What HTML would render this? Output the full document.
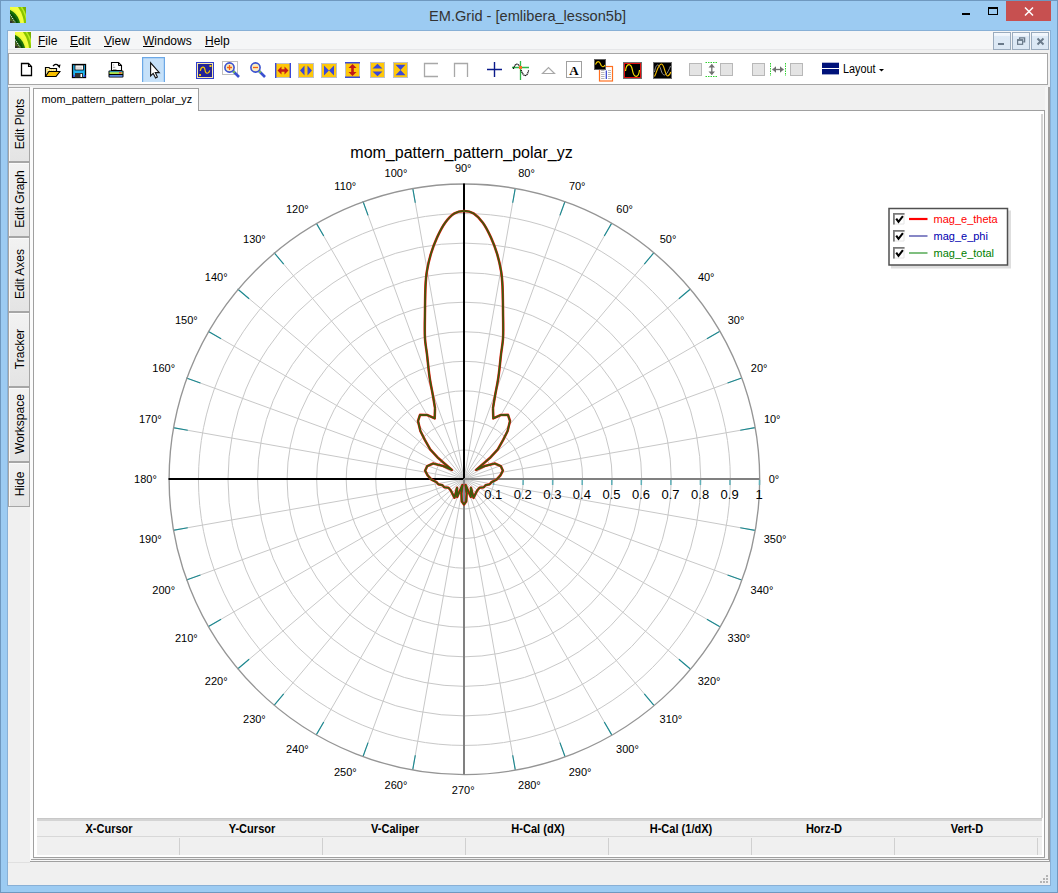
<!DOCTYPE html>
<html><head><meta charset="utf-8">
<style>
*{box-sizing:border-box}
html,body{margin:0;padding:0}
body{width:1058px;height:893px;position:relative;overflow:hidden;background:#9ccbf2;font-family:"Liberation Sans", sans-serif;}
.a{position:absolute}
</style></head><body>
<div class="a" style="left:0px;top:0px;width:1058px;height:893px;background:#9ccbf2;border:1px solid #6f98bf;box-sizing:border-box"></div>
<div class="a" style="left:429px;top:6.5px;font-size:14.6px;color:#333;white-space:nowrap;line-height:18px">EM.Grid - [emlibera_lesson5b]</div>
<div class="a" style="left:1006px;top:1px;width:45px;height:20px;background:#c75050;"></div>
<div class="a" style="left:7px;top:30px;width:1044px;height:856px;background:#f0f0f0;border:1px solid #88b0d6"></div>
<div class="a" style="left:8px;top:31px;width:1042px;height:18px;background:#f5f6f7;"></div>
<div class="a" style="left:8px;top:49px;width:1042px;height:1px;background:#e6e7e9;"></div>
<div class="a" style="left:38px;top:33px;font-size:12px;line-height:16px;white-space:nowrap;color:#000">
<span style="position:absolute;left:0"><u>F</u>ile</span>
<span style="position:absolute;left:32px"><u>E</u>dit</span>
<span style="position:absolute;left:66px"><u>V</u>iew</span>
<span style="position:absolute;left:105px"><u>W</u>indows</span>
<span style="position:absolute;left:167px"><u>H</u>elp</span>
</div>
<div class="a" style="left:993px;top:32px;width:18px;height:18px;background:linear-gradient(#f4f8fd 0%,#eef4fb 20%,#dde9f5 22%,#dce8f4 100%);border:1px solid #9aabbd"></div>
<div class="a" style="left:1012px;top:32px;width:18px;height:18px;background:linear-gradient(#f4f8fd 0%,#eef4fb 20%,#dde9f5 22%,#dce8f4 100%);border:1px solid #9aabbd"></div>
<div class="a" style="left:1031px;top:32px;width:18px;height:18px;background:linear-gradient(#f4f8fd 0%,#eef4fb 20%,#dde9f5 22%,#dce8f4 100%);border:1px solid #9aabbd"></div>
<div class="a" style="left:8px;top:53px;width:1040px;height:32px;background:#fff;border:1px solid #a6a6a6"></div>
<div class="a" style="left:30px;top:87px;width:20px;height:775px;background:#f0f0f0;"></div>
<div class="a" style="left:30px;top:87px;width:3px;height:773px;background:#fbfbfb;"></div>
<div class="a" style="left:1045px;top:87px;width:3px;height:773px;background:#f6f6f6;"></div>
<div class="a" style="left:1048px;top:87px;width:2px;height:775px;background:#a0a0a0;"></div>
<div class="a" style="left:31px;top:859px;width:1018px;height:1px;background:#a0a0a0;"></div>
<div class="a" style="left:30px;top:860px;width:1019px;height:1px;background:#f8f8f8;"></div>
<div class="a" style="left:30px;top:861px;width:1020px;height:1px;background:#a0a0a0;"></div>
<div class="a" style="left:33px;top:87px;width:1012px;height:23px;background:#f0f0f0;"></div>
<div class="a" style="left:8px;top:87px;width:22px;height:75px;border:1px solid #a6a6a6;background:linear-gradient(#f2f2f2,#e4e4e4);box-shadow:inset 1px 1px 0 #fafafa"></div>
<div class="a" style="left:-20.5px;top:116.5px;width:80px;height:14px;line-height:14px;text-align:center;font-size:12px;color:#000;transform:rotate(-90deg);white-space:nowrap">Edit Plots</div>
<div class="a" style="left:8px;top:162px;width:22px;height:75px;border:1px solid #a6a6a6;background:linear-gradient(#f2f2f2,#e4e4e4);box-shadow:inset 1px 1px 0 #fafafa"></div>
<div class="a" style="left:-20.5px;top:191.5px;width:80px;height:14px;line-height:14px;text-align:center;font-size:12px;color:#000;transform:rotate(-90deg);white-space:nowrap">Edit Graph</div>
<div class="a" style="left:8px;top:237px;width:22px;height:75px;border:1px solid #a6a6a6;background:linear-gradient(#f2f2f2,#e4e4e4);box-shadow:inset 1px 1px 0 #fafafa"></div>
<div class="a" style="left:-20.5px;top:266.5px;width:80px;height:14px;line-height:14px;text-align:center;font-size:12px;color:#000;transform:rotate(-90deg);white-space:nowrap">Edit Axes</div>
<div class="a" style="left:8px;top:312px;width:22px;height:75px;border:1px solid #a6a6a6;background:linear-gradient(#f2f2f2,#e4e4e4);box-shadow:inset 1px 1px 0 #fafafa"></div>
<div class="a" style="left:-20.5px;top:341.5px;width:80px;height:14px;line-height:14px;text-align:center;font-size:12px;color:#000;transform:rotate(-90deg);white-space:nowrap">Tracker</div>
<div class="a" style="left:8px;top:387px;width:22px;height:75px;border:1px solid #a6a6a6;background:linear-gradient(#f2f2f2,#e4e4e4);box-shadow:inset 1px 1px 0 #fafafa"></div>
<div class="a" style="left:-20.5px;top:416.5px;width:80px;height:14px;line-height:14px;text-align:center;font-size:12px;color:#000;transform:rotate(-90deg);white-space:nowrap">Workspace</div>
<div class="a" style="left:8px;top:462px;width:22px;height:45px;border:1px solid #a6a6a6;background:linear-gradient(#f2f2f2,#e4e4e4);box-shadow:inset 1px 1px 0 #fafafa"></div>
<div class="a" style="left:-20.5px;top:476.5px;width:80px;height:14px;line-height:14px;text-align:center;font-size:12px;color:#000;transform:rotate(-90deg);white-space:nowrap">Hide</div>
<div class="a" style="left:33px;top:110px;width:1012px;height:748px;background:#fff;border:1px solid #a0a0a0"></div>
<div class="a" style="left:33px;top:88px;width:166px;height:23px;background:#fff;border:1px solid #a0a0a0;border-bottom:none"></div>
<div class="a" style="left:41.5px;top:93px;font-size:10.85px;line-height:13px;white-space:nowrap">mom_pattern_pattern_polar_yz</div>
<div class="a" style="left:1041px;top:114px;width:2px;height:704px;background:#d4d4d4;"></div>
<div class="a" style="left:37px;top:818px;width:1005px;height:37px;background:#f0f0f0;"></div>
<div class="a" style="left:37px;top:818px;width:1005px;height:1px;background:#c8c8c8;"></div>
<div class="a" style="left:37px;top:819px;width:1005px;height:2px;background:#d4d4d4;"></div>
<div class="a" style="left:37px;top:836px;width:1005px;height:1px;background:#d8d8d8;"></div>
<div class="a" style="left:38.5px;top:821.5px;width:140px;height:15px;line-height:15px;text-align:center;font-size:12px;font-weight:bold;transform:scaleX(0.92);color:#000;white-space:nowrap">X-Cursor</div>
<div class="a" style="left:181.5px;top:821.5px;width:140px;height:15px;line-height:15px;text-align:center;font-size:12px;font-weight:bold;transform:scaleX(0.92);color:#000;white-space:nowrap">Y-Cursor</div>
<div class="a" style="left:324.5px;top:821.5px;width:140px;height:15px;line-height:15px;text-align:center;font-size:12px;font-weight:bold;transform:scaleX(0.92);color:#000;white-space:nowrap">V-Caliper</div>
<div class="a" style="left:467.5px;top:821.5px;width:140px;height:15px;line-height:15px;text-align:center;font-size:12px;font-weight:bold;transform:scaleX(0.92);color:#000;white-space:nowrap">H-Cal (dX)</div>
<div class="a" style="left:610.5px;top:821.5px;width:140px;height:15px;line-height:15px;text-align:center;font-size:12px;font-weight:bold;transform:scaleX(0.92);color:#000;white-space:nowrap">H-Cal (1/dX)</div>
<div class="a" style="left:753.5px;top:821.5px;width:140px;height:15px;line-height:15px;text-align:center;font-size:12px;font-weight:bold;transform:scaleX(0.92);color:#000;white-space:nowrap">Horz-D</div>
<div class="a" style="left:896.5px;top:821.5px;width:140px;height:15px;line-height:15px;text-align:center;font-size:12px;font-weight:bold;transform:scaleX(0.92);color:#000;white-space:nowrap">Vert-D</div>
<div class="a" style="left:179px;top:838px;width:1px;height:17px;background:#d0d0d0;"></div>
<div class="a" style="left:322px;top:838px;width:1px;height:17px;background:#d0d0d0;"></div>
<div class="a" style="left:465px;top:838px;width:1px;height:17px;background:#d0d0d0;"></div>
<div class="a" style="left:608px;top:838px;width:1px;height:17px;background:#d0d0d0;"></div>
<div class="a" style="left:751px;top:838px;width:1px;height:17px;background:#d0d0d0;"></div>
<div class="a" style="left:894px;top:838px;width:1px;height:17px;background:#d0d0d0;"></div>
<div class="a" style="left:1037px;top:838px;width:1px;height:17px;background:#d0d0d0;"></div>
<div class="a" style="left:8px;top:862px;width:1042px;height:23px;background:#f0f0f0;"></div>
<div class="a" style="left:8px;top:862px;width:22px;height:1px;background:#e0e0e0;"></div>
<svg class="a" style="left:0;top:0" width="1058" height="893" font-family='"Liberation Sans", sans-serif'>
<g transform="translate(10,7)">
<clipPath id="ic10"><rect x="0" y="0" width="16" height="16"/></clipPath>
<g clip-path="url(#ic10)">
<rect x="0" y="0" width="16" height="16" fill="#78b000"/>
<ellipse cx="-6" cy="20" rx="24" ry="31" fill="#b8ec20"/>
<ellipse cx="-6" cy="20" rx="22.5" ry="29.5" fill="#88c400"/>
<ellipse cx="-6" cy="20" rx="20.2" ry="27.7" fill="#f4ff40"/>
<ellipse cx="-6" cy="20" rx="17.5" ry="20" fill="#e8f838"/>
<ellipse cx="-6" cy="20" rx="16.4" ry="18.3" fill="#1a7008"/>
<ellipse cx="-6" cy="20" rx="14.5" ry="16" fill="#084e06"/>
<path d="M0,7.5 L5.5,16" stroke="#e8e8e0" stroke-width="1.1" stroke-dasharray="1.2,0.9"/>
<path d="M0,9 V16 H5 Z" fill="#4a6020"/>
<rect x="0" y="14" width="2.5" height="2" fill="#303030"/>
</g></g>
<g transform="translate(15,32)">
<clipPath id="ic15"><rect x="0" y="0" width="16" height="16"/></clipPath>
<g clip-path="url(#ic15)">
<rect x="0" y="0" width="16" height="16" fill="#78b000"/>
<ellipse cx="-6" cy="20" rx="24" ry="31" fill="#b8ec20"/>
<ellipse cx="-6" cy="20" rx="22.5" ry="29.5" fill="#88c400"/>
<ellipse cx="-6" cy="20" rx="20.2" ry="27.7" fill="#f4ff40"/>
<ellipse cx="-6" cy="20" rx="17.5" ry="20" fill="#e8f838"/>
<ellipse cx="-6" cy="20" rx="16.4" ry="18.3" fill="#1a7008"/>
<ellipse cx="-6" cy="20" rx="14.5" ry="16" fill="#084e06"/>
<path d="M0,7.5 L5.5,16" stroke="#e8e8e0" stroke-width="1.1" stroke-dasharray="1.2,0.9"/>
<path d="M0,9 V16 H5 Z" fill="#4a6020"/>
<rect x="0" y="14" width="2.5" height="2" fill="#303030"/>
</g></g>
<path d="M962,14 H970" stroke="#000" stroke-width="2"/>
<rect x="988.5" y="7.5" width="9" height="7" fill="none" stroke="#000" stroke-width="1"/>
<path d="M988,8 H998" stroke="#000" stroke-width="2"/>
<path d="M1025,7.5 L1033,15.5 M1033,7.5 L1025,15.5" stroke="#fff" stroke-width="1.5"/>
<path d="M998,44 H1004" stroke="#6a7a8a" stroke-width="2"/>
<rect x="1017.6" y="40" width="5" height="4.3" fill="none" stroke="#6a7a8a" stroke-width="1.2"/>
<path d="M1017,40 H1023.2" stroke="#6a7a8a" stroke-width="1.6"/>
<path d="M1019.6,39 V37.8 H1024.6 V41.8 H1023.2" fill="none" stroke="#6a7a8a" stroke-width="1.3"/>
<path d="M1037.5,38.5 L1043.5,44.5 M1043.5,38.5 L1037.5,44.5" stroke="#6a7a8a" stroke-width="1.9"/>
<path d="M21.5,63.5 H28.5 L31.5,66.5 V75.5 H21.5 Z" fill="#fff" stroke="#000" stroke-width="1.3"/>
<path d="M28.5,63.5 V66.5 H31.5" fill="none" stroke="#000" stroke-width="1.1"/>
<path d="M45.5,76.5 V67.5 H49 L50,68.5 H56.5 V71.5 H59.5 L55.5,76.5 Z" fill="#fbf0b0" stroke="#000" stroke-width="1.2"/>
<path d="M47,69 h1 v1 h-1z M49,70 h1 v1 h-1z M51,69.5 h1 v1 h-1z M53,69.5 h1 v1 h-1z M47,71 h1 v1 h-1z" fill="#f0d040"/>
<path d="M45.5,76.5 L48.8,71.5 H60 L56,76.5 Z" fill="#f8c000" stroke="#000" stroke-width="1.2" stroke-linejoin="round"/>
<path d="M53,66.2 Q55.5,62.8 58.6,65.6" fill="none" stroke="#000" stroke-width="1.2"/>
<path d="M57,65.3 L60.6,64.6 L59.6,68.2 Z" fill="#000"/>
<rect x="72.5" y="64.5" width="13" height="13" fill="#20b4f0" stroke="#000" stroke-width="1.3"/>
<rect x="75" y="65" width="8.5" height="5" fill="#fff" stroke="#000" stroke-width="0.8"/>
<rect x="76" y="66.5" width="6" height="2.5" fill="#ddd"/>
<rect x="75" y="73" width="8" height="4.5" fill="#333"/>
<rect x="80.5" y="74" width="1.5" height="3" fill="#fff"/>
<rect x="73" y="75" width="1.5" height="2" fill="#4040e0"/><rect x="84" y="75" width="1.5" height="2" fill="#4040e0"/>
<path d="M111.5,62.5 H118.5 L121.5,65.5 V70.5 H111.5 Z" fill="#fff" stroke="#000" stroke-width="1.1"/>
<path d="M118.5,62.5 V65.5 H121.5" fill="none" stroke="#000" stroke-width="1"/>
<rect x="113" y="64.5" width="1.2" height="0.9" fill="#999"/><rect x="113" y="66.8" width="2.2" height="0.9" fill="#999"/><rect x="113" y="69" width="3.5" height="0.9" fill="#999"/>
<rect x="108.5" y="70.5" width="15" height="7" rx="1" fill="#000"/>
<rect x="109.5" y="72" width="13" height="2" fill="#b0e040"/>
<rect x="109.5" y="71.3" width="13" height="0.9" fill="#40c8f0"/>
<rect x="119" y="72" width="2.5" height="1.5" fill="#f04040"/>
<rect x="109.5" y="75" width="13" height="1.8" fill="#5888e0"/>
<rect x="142" y="57" width="23" height="25" fill="#c6e1f9"/>
<path d="M142.6,82 V57.6 H164.4 V82" fill="none" stroke="#6ca8e6" stroke-width="1.2"/>
<path d="M150.6,62.8 V76 L153.2,73.4 L155.6,78 L157.4,77.1 L155.3,72.6 H159.3 Z" fill="#fff" stroke="#111" stroke-width="1.1" stroke-linejoin="miter"/>
<rect x="196" y="62" width="18" height="17" fill="#3040d0"/>
<rect x="197" y="63" width="16" height="15" fill="#f8e8a8"/>
<rect x="198" y="64" width="14" height="13" fill="#22249a"/>
<path d="M200.3,71 C201,66 204.5,66 205,70 C205.5,74 208.5,74.5 209.8,70.5" fill="none" stroke="#f8c800" stroke-width="1.2"/>
<rect x="209.5" y="65" width="2" height="2" fill="#f8c800"/><rect x="199" y="74" width="2" height="2" fill="#f8c800"/>
<rect x="222.5" y="61.5" width="15" height="13" fill="#fff" stroke="#c0c0c0" stroke-width="1"/>
<path d="M233,71 L239,77" stroke="#3a50d0" stroke-width="2.6"/>
<path d="M233.3,71.3 L234.6,72.6" stroke="#80d040" stroke-width="2"/>
<circle cx="229.5" cy="67.5" r="4.6" fill="#f8ecc0" stroke="#3a50d0" stroke-width="1.6"/>
<path d="M227,67.5 H232 M229.5,65 V70" stroke="#f86010" stroke-width="1.3"/>
<path d="M259,71 L265,77" stroke="#3a50d0" stroke-width="2.6"/>
<path d="M259.3,71.3 L260.6,72.6" stroke="#80d040" stroke-width="2"/>
<circle cx="255.5" cy="67.5" r="4.6" fill="#f8ecc0" stroke="#3a50d0" stroke-width="1.6"/>
<path d="M253,67.5 H258" stroke="#f86010" stroke-width="1.3"/>
<rect x="275" y="63" width="16" height="15" fill="#ffc808"/>
<path d="M275,63.5 H291 M275,77.5 H291" stroke="#c0c0c8" stroke-width="1"/>
<path d="M275.7,63 V78 M290.3,63 V78" stroke="#3a48d8" stroke-width="1.4"/>
<path d="M277.5,70.5 L281.5,66.5 V69.2 H284.5 V66.5 L288.5,70.5 L284.5,74.5 V71.8 H281.5 V74.5 Z" fill="#c01818"/>
<rect x="298.5" y="63.5" width="15" height="14" fill="#ffc808" stroke="#c0c0c8" stroke-width="1"/>
<path d="M300,70.5 L304.5,65.5 V75.5 Z M307.5,65.5 L312,70.5 L307.5,75.5 Z" fill="#3a48d8"/>
<rect x="321.5" y="63.5" width="15" height="14" fill="#ffc808" stroke="#c0c0c8" stroke-width="1"/>
<path d="M324,65.5 L329,70.5 L324,75.5 Z M334,65.5 L329,70.5 L334,75.5 Z" fill="#3a48d8"/>
<rect x="345" y="62" width="15" height="16" fill="#ffc808"/>
<path d="M345.5,62 V78 M359.5,62 V78" stroke="#c0c0c8" stroke-width="1"/>
<path d="M345,62.7 H360 M345,77.3 H360" stroke="#3a48d8" stroke-width="1.4"/>
<path d="M352.5,64 L356.5,68 H353.8 V72 H356.5 L352.5,76 L348.5,72 H351.2 V68 H348.5 Z" fill="#c01818"/>
<rect x="370.5" y="62.5" width="14" height="15" fill="#ffc808" stroke="#c0c0c8" stroke-width="1"/>
<path d="M372.5,68.5 L377.5,63.8 L382.5,68.5 Z M372.5,71.5 H382.5 L377.5,76.2 Z" fill="#3a48d8"/>
<rect x="393.5" y="62.5" width="14" height="15" fill="#ffc808" stroke="#c0c0c8" stroke-width="1"/>
<path d="M395.5,64.8 H405.5 L400.5,70 L405.5,75.2 H395.5 L400.5,70 Z" fill="#3a48d8"/>
<path d="M438,63.5 H424.5 V76.5 H438" fill="none" stroke="#a8a8a8" stroke-width="1.3"/>
<path d="M454.5,77 V63.5 H467.5 V77" fill="none" stroke="#a8a8a8" stroke-width="1.3"/>
<path d="M487,69.5 H502 M494.5,62 V77" stroke="#0a1a8a" stroke-width="1.4"/>
<path d="M512,67.5 H529 M520.5,61 V80" stroke="#30b848" stroke-width="1.3"/>
<path d="M513.4,68.8 C514.3,65.5 516,63.8 517.5,64.3 C518.5,64.6 519,65.5 520,67 M521,70 C522,72.5 523.5,75.6 525,75.6 C526.8,75.6 528,73.2 528.6,70.2" fill="none" stroke="#000" stroke-width="1.2" stroke-dasharray="1.3,0.5"/>
<rect x="519" y="66" width="3" height="3" fill="#f87020"/>
<path d="M542.5,73.5 L548.5,67.5 L554.5,73.5 Z" fill="none" stroke="#a8a8a8" stroke-width="1.2"/>
<rect x="566.5" y="61.5" width="15" height="16" fill="#fff" stroke="#a0a0a0" stroke-width="1"/>
<text x="574" y="75" font-family="Liberation Serif" font-weight="bold" font-size="13" text-anchor="middle" fill="#000">A</text>
<rect x="599.5" y="66.5" width="13" height="14.5" fill="#fff" stroke="#ff7020" stroke-width="1.2"/>
<path d="M601,70.5 H604.5 M601,72.5 H604.5 M601,74.5 H604.5 M601,76.5 H604.5 M601,78.5 H604.5 M608,70.5 H611 M608,72.5 H611 M608,74.5 H611 M608,76.5 H611 M608,78.5 H611" stroke="#b0b0b0" stroke-width="0.9"/>
<path d="M606.3,70.5 V79" stroke="#3040d0" stroke-width="1.2"/>
<rect x="594.5" y="59.5" width="11" height="10" fill="#000" stroke="#606060" stroke-width="1"/>
<path d="M595.5,64.5 C597,60.5 599.5,61 600.5,64 C601.5,67.5 604,67.5 605,65" fill="none" stroke="#f8d000" stroke-width="1.1"/>
<rect x="623.5" y="62.5" width="18" height="16" fill="#000" stroke="#707070" stroke-width="1"/>
<rect x="624.5" y="63.5" width="16" height="14" fill="none" stroke="#e01010" stroke-width="1"/>
<path d="M625.5,71 C626.5,62.5 631,62.5 632.5,70.5 C634,78.5 638.5,78.5 639.5,70" fill="none" stroke="#f8e000" stroke-width="1.2"/>
<rect x="653.5" y="62.5" width="18" height="16" fill="#000" stroke="#707070" stroke-width="1"/>
<path d="M654.5,72 C656,63 659,63 661,70 C663,77 666,77.5 670.5,66" fill="none" stroke="#909090" stroke-width="1"/>
<path d="M654.5,76.5 C657,72 658,64 661.5,64 C664.5,64 665,76 667.5,76 C669,76 670,74 670.8,72" fill="none" stroke="#f8c000" stroke-width="1.1"/>
<rect x="689.5" y="63.5" width="12" height="12" fill="#e4e4e4" stroke="#b8b8b8" stroke-width="1"/>
<rect x="720.5" y="63.5" width="12" height="12" fill="#e4e4e4" stroke="#b8b8b8" stroke-width="1"/>
<rect x="752.5" y="63.5" width="12" height="12" fill="#e4e4e4" stroke="#b8b8b8" stroke-width="1"/>
<rect x="790.5" y="63.5" width="12" height="12" fill="#e4e4e4" stroke="#b8b8b8" stroke-width="1"/>
<path d="M705.5,62.5 H718 M705.5,76.5 H718" stroke="#30d030" stroke-width="1" stroke-dasharray="1.5,1"/>
<path d="M711.8,64.5 V74.5" stroke="#707070" stroke-width="1.3"/>
<path d="M708.5,67.5 L711.8,64 L715,67.5 Z M708.5,71.5 L711.8,75 L715,71.5 Z" fill="#707070"/>
<path d="M770.5,63 V76 M785.5,63 V76" stroke="#30d030" stroke-width="1" stroke-dasharray="1.5,1"/>
<path d="M772.5,69.5 H783.5" stroke="#707070" stroke-width="1.3"/>
<path d="M776,66.3 L772.3,69.5 L776,72.7 Z M780,66.3 L783.7,69.5 L780,72.7 Z" fill="#707070"/>
<rect x="822" y="62.7" width="17" height="5.3" fill="#00127a"/><rect x="822" y="69" width="17" height="5.4" fill="#00127a"/>
<text x="843" y="72.7" font-size="12" fill="#000" textLength="32.5" lengthAdjust="spacingAndGlyphs">Layout</text>
<path d="M879,69 H884 L881.5,71.5 Z" fill="#000"/>
<circle cx="464.4" cy="479.5" r="29.55" fill="none" stroke="#c8c8c8" stroke-width="1"/>
<circle cx="464.4" cy="479.5" r="59.10" fill="none" stroke="#c8c8c8" stroke-width="1"/>
<circle cx="464.4" cy="479.5" r="88.65" fill="none" stroke="#c8c8c8" stroke-width="1"/>
<circle cx="464.4" cy="479.5" r="118.20" fill="none" stroke="#c8c8c8" stroke-width="1"/>
<circle cx="464.4" cy="479.5" r="147.75" fill="none" stroke="#c8c8c8" stroke-width="1"/>
<circle cx="464.4" cy="479.5" r="177.30" fill="none" stroke="#c8c8c8" stroke-width="1"/>
<circle cx="464.4" cy="479.5" r="206.85" fill="none" stroke="#c8c8c8" stroke-width="1"/>
<circle cx="464.4" cy="479.5" r="236.40" fill="none" stroke="#c8c8c8" stroke-width="1"/>
<circle cx="464.4" cy="479.5" r="265.95" fill="none" stroke="#c8c8c8" stroke-width="1"/>
<line x1="464.0" y1="479.0" x2="755.01" y2="427.69" stroke="#c8c8c8" stroke-width="1"/>
<line x1="464.0" y1="479.0" x2="741.68" y2="377.93" stroke="#c8c8c8" stroke-width="1"/>
<line x1="464.0" y1="479.0" x2="719.91" y2="331.25" stroke="#c8c8c8" stroke-width="1"/>
<line x1="464.0" y1="479.0" x2="690.37" y2="289.06" stroke="#c8c8c8" stroke-width="1"/>
<line x1="464.0" y1="479.0" x2="653.94" y2="252.63" stroke="#c8c8c8" stroke-width="1"/>
<line x1="464.0" y1="479.0" x2="611.75" y2="223.09" stroke="#c8c8c8" stroke-width="1"/>
<line x1="464.0" y1="479.0" x2="565.07" y2="201.32" stroke="#c8c8c8" stroke-width="1"/>
<line x1="464.0" y1="479.0" x2="515.31" y2="187.99" stroke="#c8c8c8" stroke-width="1"/>
<line x1="464.0" y1="479.0" x2="412.69" y2="187.99" stroke="#c8c8c8" stroke-width="1"/>
<line x1="464.0" y1="479.0" x2="362.93" y2="201.32" stroke="#c8c8c8" stroke-width="1"/>
<line x1="464.0" y1="479.0" x2="316.25" y2="223.09" stroke="#c8c8c8" stroke-width="1"/>
<line x1="464.0" y1="479.0" x2="274.06" y2="252.63" stroke="#c8c8c8" stroke-width="1"/>
<line x1="464.0" y1="479.0" x2="237.63" y2="289.06" stroke="#c8c8c8" stroke-width="1"/>
<line x1="464.0" y1="479.0" x2="208.09" y2="331.25" stroke="#c8c8c8" stroke-width="1"/>
<line x1="464.0" y1="479.0" x2="186.32" y2="377.93" stroke="#c8c8c8" stroke-width="1"/>
<line x1="464.0" y1="479.0" x2="172.99" y2="427.69" stroke="#c8c8c8" stroke-width="1"/>
<line x1="464.0" y1="479.0" x2="172.99" y2="530.31" stroke="#c8c8c8" stroke-width="1"/>
<line x1="464.0" y1="479.0" x2="186.32" y2="580.07" stroke="#c8c8c8" stroke-width="1"/>
<line x1="464.0" y1="479.0" x2="208.09" y2="626.75" stroke="#c8c8c8" stroke-width="1"/>
<line x1="464.0" y1="479.0" x2="237.63" y2="668.94" stroke="#c8c8c8" stroke-width="1"/>
<line x1="464.0" y1="479.0" x2="274.06" y2="705.37" stroke="#c8c8c8" stroke-width="1"/>
<line x1="464.0" y1="479.0" x2="316.25" y2="734.91" stroke="#c8c8c8" stroke-width="1"/>
<line x1="464.0" y1="479.0" x2="362.93" y2="756.68" stroke="#c8c8c8" stroke-width="1"/>
<line x1="464.0" y1="479.0" x2="412.69" y2="770.01" stroke="#c8c8c8" stroke-width="1"/>
<line x1="464.0" y1="479.0" x2="515.31" y2="770.01" stroke="#c8c8c8" stroke-width="1"/>
<line x1="464.0" y1="479.0" x2="565.07" y2="756.68" stroke="#c8c8c8" stroke-width="1"/>
<line x1="464.0" y1="479.0" x2="611.75" y2="734.91" stroke="#c8c8c8" stroke-width="1"/>
<line x1="464.0" y1="479.0" x2="653.94" y2="705.37" stroke="#c8c8c8" stroke-width="1"/>
<line x1="464.0" y1="479.0" x2="690.37" y2="668.94" stroke="#c8c8c8" stroke-width="1"/>
<line x1="464.0" y1="479.0" x2="719.91" y2="626.75" stroke="#c8c8c8" stroke-width="1"/>
<line x1="464.0" y1="479.0" x2="741.68" y2="580.07" stroke="#c8c8c8" stroke-width="1"/>
<line x1="464.0" y1="479.0" x2="755.01" y2="530.31" stroke="#c8c8c8" stroke-width="1"/>
<line x1="755.01" y1="427.69" x2="740.24" y2="430.29" stroke="#1a8890" stroke-width="1.15"/>
<line x1="741.68" y1="377.93" x2="727.58" y2="383.06" stroke="#1a8890" stroke-width="1.15"/>
<line x1="719.91" y1="331.25" x2="706.92" y2="338.75" stroke="#1a8890" stroke-width="1.15"/>
<line x1="690.37" y1="289.06" x2="678.88" y2="298.70" stroke="#1a8890" stroke-width="1.15"/>
<line x1="653.94" y1="252.63" x2="644.30" y2="264.12" stroke="#1a8890" stroke-width="1.15"/>
<line x1="611.75" y1="223.09" x2="604.25" y2="236.08" stroke="#1a8890" stroke-width="1.15"/>
<line x1="565.07" y1="201.32" x2="559.94" y2="215.42" stroke="#1a8890" stroke-width="1.15"/>
<line x1="515.31" y1="187.99" x2="512.71" y2="202.76" stroke="#1a8890" stroke-width="1.15"/>
<line x1="412.69" y1="187.99" x2="415.29" y2="202.76" stroke="#1a8890" stroke-width="1.15"/>
<line x1="362.93" y1="201.32" x2="368.06" y2="215.42" stroke="#1a8890" stroke-width="1.15"/>
<line x1="316.25" y1="223.09" x2="323.75" y2="236.08" stroke="#1a8890" stroke-width="1.15"/>
<line x1="274.06" y1="252.63" x2="283.70" y2="264.12" stroke="#1a8890" stroke-width="1.15"/>
<line x1="237.63" y1="289.06" x2="249.12" y2="298.70" stroke="#1a8890" stroke-width="1.15"/>
<line x1="208.09" y1="331.25" x2="221.08" y2="338.75" stroke="#1a8890" stroke-width="1.15"/>
<line x1="186.32" y1="377.93" x2="200.42" y2="383.06" stroke="#1a8890" stroke-width="1.15"/>
<line x1="172.99" y1="427.69" x2="187.76" y2="430.29" stroke="#1a8890" stroke-width="1.15"/>
<line x1="172.99" y1="530.31" x2="187.76" y2="527.71" stroke="#1a8890" stroke-width="1.15"/>
<line x1="186.32" y1="580.07" x2="200.42" y2="574.94" stroke="#1a8890" stroke-width="1.15"/>
<line x1="208.09" y1="626.75" x2="221.08" y2="619.25" stroke="#1a8890" stroke-width="1.15"/>
<line x1="237.63" y1="668.94" x2="249.12" y2="659.30" stroke="#1a8890" stroke-width="1.15"/>
<line x1="274.06" y1="705.37" x2="283.70" y2="693.88" stroke="#1a8890" stroke-width="1.15"/>
<line x1="316.25" y1="734.91" x2="323.75" y2="721.92" stroke="#1a8890" stroke-width="1.15"/>
<line x1="362.93" y1="756.68" x2="368.06" y2="742.58" stroke="#1a8890" stroke-width="1.15"/>
<line x1="412.69" y1="770.01" x2="415.29" y2="755.24" stroke="#1a8890" stroke-width="1.15"/>
<line x1="515.31" y1="770.01" x2="512.71" y2="755.24" stroke="#1a8890" stroke-width="1.15"/>
<line x1="565.07" y1="756.68" x2="559.94" y2="742.58" stroke="#1a8890" stroke-width="1.15"/>
<line x1="611.75" y1="734.91" x2="604.25" y2="721.92" stroke="#1a8890" stroke-width="1.15"/>
<line x1="653.94" y1="705.37" x2="644.30" y2="693.88" stroke="#1a8890" stroke-width="1.15"/>
<line x1="690.37" y1="668.94" x2="678.88" y2="659.30" stroke="#1a8890" stroke-width="1.15"/>
<line x1="719.91" y1="626.75" x2="706.92" y2="619.25" stroke="#1a8890" stroke-width="1.15"/>
<line x1="741.68" y1="580.07" x2="727.58" y2="574.94" stroke="#1a8890" stroke-width="1.15"/>
<line x1="755.01" y1="530.31" x2="740.24" y2="527.71" stroke="#1a8890" stroke-width="1.15"/>
<circle cx="464.4" cy="479.3" r="295.3" fill="none" stroke="#959595" stroke-width="1.35"/>
<line x1="464.0" y1="479.0" x2="464.0" y2="183.5" stroke="#000" stroke-width="2"/>
<line x1="464.0" y1="479.0" x2="168.5" y2="479.0" stroke="#000" stroke-width="2"/>
<line x1="464.0" y1="479.0" x2="759.5" y2="479.0" stroke="#808080" stroke-width="2"/>
<line x1="464.0" y1="479.0" x2="464.0" y2="774.5" stroke="#808080" stroke-width="2"/>
<line x1="493.55" y1="480.0" x2="493.55" y2="485.0" stroke="#5fb0b8" stroke-width="1.5"/>
<line x1="523.10" y1="480.0" x2="523.10" y2="485.0" stroke="#5fb0b8" stroke-width="1.5"/>
<line x1="552.65" y1="480.0" x2="552.65" y2="485.0" stroke="#5fb0b8" stroke-width="1.5"/>
<line x1="582.20" y1="480.0" x2="582.20" y2="485.0" stroke="#5fb0b8" stroke-width="1.5"/>
<line x1="611.75" y1="480.0" x2="611.75" y2="485.0" stroke="#5fb0b8" stroke-width="1.5"/>
<line x1="641.30" y1="480.0" x2="641.30" y2="485.0" stroke="#5fb0b8" stroke-width="1.5"/>
<line x1="670.85" y1="480.0" x2="670.85" y2="485.0" stroke="#5fb0b8" stroke-width="1.5"/>
<line x1="700.40" y1="480.0" x2="700.40" y2="485.0" stroke="#5fb0b8" stroke-width="1.5"/>
<line x1="729.95" y1="480.0" x2="729.95" y2="485.0" stroke="#5fb0b8" stroke-width="1.5"/>
<line x1="759.50" y1="480.0" x2="759.50" y2="485.0" stroke="#5fb0b8" stroke-width="1.5"/>
<text x="493.25" y="498.6" font-size="13" text-anchor="middle" fill="#000">0.1</text>
<text x="522.80" y="498.6" font-size="13" text-anchor="middle" fill="#000">0.2</text>
<text x="552.35" y="498.6" font-size="13" text-anchor="middle" fill="#000">0.3</text>
<text x="581.90" y="498.6" font-size="13" text-anchor="middle" fill="#000">0.4</text>
<text x="611.45" y="498.6" font-size="13" text-anchor="middle" fill="#000">0.5</text>
<text x="641.00" y="498.6" font-size="13" text-anchor="middle" fill="#000">0.6</text>
<text x="670.55" y="498.6" font-size="13" text-anchor="middle" fill="#000">0.7</text>
<text x="700.10" y="498.6" font-size="13" text-anchor="middle" fill="#000">0.8</text>
<text x="729.65" y="498.6" font-size="13" text-anchor="middle" fill="#000">0.9</text>
<text x="759.20" y="498.6" font-size="13" text-anchor="middle" fill="#000">1</text>
<path d="M463.5,486 L463.5,502" stroke="#8890a8" stroke-width="2"/>
<path d="M435.00,408.10 C434.67,406.08 433.90,401.15 433.00,396.00 C432.10,390.85 430.60,384.13 429.60,377.20 C428.60,370.27 427.78,361.10 427.00,354.40 C426.22,347.70 425.23,344.40 424.90,337.00 C424.57,329.60 424.90,318.50 425.00,310.00 C425.10,301.50 425.18,292.47 425.50,286.00 C425.82,279.53 426.00,276.57 426.90,271.20 C427.80,265.83 429.22,259.40 430.90,253.80 C432.58,248.20 434.65,242.75 437.00,237.60 C439.35,232.45 442.10,226.93 445.00,222.90 C447.90,218.87 451.20,215.38 454.40,213.40 C457.60,211.42 461.00,211.00 464.20,211.00 C467.40,211.00 470.47,211.42 473.60,213.40 C476.73,215.38 480.10,218.87 483.00,222.90 C485.90,226.93 488.65,232.45 491.00,237.60 C493.35,242.75 495.42,248.20 497.10,253.80 C498.78,259.40 500.20,265.83 501.10,271.20 C502.00,276.57 502.18,279.53 502.50,286.00 C502.82,292.47 502.90,301.50 503.00,310.00 C503.10,318.50 503.43,329.60 503.10,337.00 C502.77,344.40 501.78,347.70 501.00,354.40 C500.22,361.10 499.40,370.27 498.40,377.20 C497.40,384.13 495.90,390.85 495.00,396.00 C494.10,401.15 493.33,406.08 493.00,408.10 M493.0,408.1 L493.3,418.4 L500.8,415.0 L508.0,414.9 L510.0,421.0 L507.6,431.0 L503.3,439.6 L497.8,449.4 L489.8,458.1 L476.1,469.9 L484.6,466.1 L494.8,463.5 L500.8,466.1 L502.9,470.7 L500.4,475.4 L496.5,479.7 L491.4,482.2 L489.7,484.3 L485.5,485.2 L483.8,487.3 L479.5,487.7 L477.0,490.8 L473.5,497.8 L471.0,487.7 L470.8,497.0 L465.6,485.0 L466.6,493.5 L466.2,501.5 L464.0,504.5 L461.8,501.5 L461.4,493.5 L462.4,485.0 L457.2,497.0 L457.0,487.7 L454.5,497.8 L451.0,490.8 L448.5,487.7 L444.2,487.3 L442.5,485.2 L438.3,484.3 L436.6,482.2 L431.5,479.7 L427.6,475.4 L425.1,470.7 L427.2,466.1 L433.2,463.5 L443.4,466.1 L451.9,469.9 L438.2,458.1 L430.2,449.4 L424.7,439.6 L420.4,431.0 L418.0,421.0 L420.0,414.9 L427.2,415.0 L434.7,418.4 L435.0,408.1" fill="none" stroke="#f03020" stroke-width="2.6" stroke-linejoin="round"/>
<path d="M435.00,408.10 C434.67,406.08 433.90,401.15 433.00,396.00 C432.10,390.85 430.60,384.13 429.60,377.20 C428.60,370.27 427.78,361.10 427.00,354.40 C426.22,347.70 425.23,344.40 424.90,337.00 C424.57,329.60 424.90,318.50 425.00,310.00 C425.10,301.50 425.18,292.47 425.50,286.00 C425.82,279.53 426.00,276.57 426.90,271.20 C427.80,265.83 429.22,259.40 430.90,253.80 C432.58,248.20 434.65,242.75 437.00,237.60 C439.35,232.45 442.10,226.93 445.00,222.90 C447.90,218.87 451.20,215.38 454.40,213.40 C457.60,211.42 461.00,211.00 464.20,211.00 C467.40,211.00 470.47,211.42 473.60,213.40 C476.73,215.38 480.10,218.87 483.00,222.90 C485.90,226.93 488.65,232.45 491.00,237.60 C493.35,242.75 495.42,248.20 497.10,253.80 C498.78,259.40 500.20,265.83 501.10,271.20 C502.00,276.57 502.18,279.53 502.50,286.00 C502.82,292.47 502.90,301.50 503.00,310.00 C503.10,318.50 503.43,329.60 503.10,337.00 C502.77,344.40 501.78,347.70 501.00,354.40 C500.22,361.10 499.40,370.27 498.40,377.20 C497.40,384.13 495.90,390.85 495.00,396.00 C494.10,401.15 493.33,406.08 493.00,408.10 M493.0,408.1 L493.3,418.4 L500.8,415.0 L508.0,414.9 L510.0,421.0 L507.6,431.0 L503.3,439.6 L497.8,449.4 L489.8,458.1 L476.1,469.9 L484.6,466.1 L494.8,463.5 L500.8,466.1 L502.9,470.7 L500.4,475.4 L496.5,479.7 L491.4,482.2 L489.7,484.3 L485.5,485.2 L483.8,487.3 L479.5,487.7 L477.0,490.8 L473.5,497.8 L471.0,487.7 L470.8,497.0 L465.6,485.0 L466.6,493.5 L466.2,501.5 L464.0,504.5 L461.8,501.5 L461.4,493.5 L462.4,485.0 L457.2,497.0 L457.0,487.7 L454.5,497.8 L451.0,490.8 L448.5,487.7 L444.2,487.3 L442.5,485.2 L438.3,484.3 L436.6,482.2 L431.5,479.7 L427.6,475.4 L425.1,470.7 L427.2,466.1 L433.2,463.5 L443.4,466.1 L451.9,469.9 L438.2,458.1 L430.2,449.4 L424.7,439.6 L420.4,431.0 L418.0,421.0 L420.0,414.9 L427.2,415.0 L434.7,418.4 L435.0,408.1" fill="none" stroke="#6a3208" stroke-width="1.8" stroke-linejoin="round"/>
<path d="M435.00,408.10 C434.67,406.08 433.90,401.15 433.00,396.00 C432.10,390.85 430.60,384.13 429.60,377.20 C428.60,370.27 427.78,361.10 427.00,354.40 C426.22,347.70 425.23,344.40 424.90,337.00 C424.57,329.60 424.90,318.50 425.00,310.00 C425.10,301.50 425.18,292.47 425.50,286.00 C425.82,279.53 426.00,276.57 426.90,271.20 C427.80,265.83 429.22,259.40 430.90,253.80 C432.58,248.20 434.65,242.75 437.00,237.60 C439.35,232.45 442.10,226.93 445.00,222.90 C447.90,218.87 451.20,215.38 454.40,213.40 C457.60,211.42 461.00,211.00 464.20,211.00 C467.40,211.00 470.47,211.42 473.60,213.40 C476.73,215.38 480.10,218.87 483.00,222.90 C485.90,226.93 488.65,232.45 491.00,237.60 C493.35,242.75 495.42,248.20 497.10,253.80 C498.78,259.40 500.20,265.83 501.10,271.20 C502.00,276.57 502.18,279.53 502.50,286.00 C502.82,292.47 502.90,301.50 503.00,310.00 C503.10,318.50 503.43,329.60 503.10,337.00 C502.77,344.40 501.78,347.70 501.00,354.40 C500.22,361.10 499.40,370.27 498.40,377.20 C497.40,384.13 495.90,390.85 495.00,396.00 C494.10,401.15 493.33,406.08 493.00,408.10 M493.0,408.1 L493.3,418.4 L500.8,415.0 L508.0,414.9 L510.0,421.0 L507.6,431.0 L503.3,439.6 L497.8,449.4 L489.8,458.1 L476.1,469.9 L484.6,466.1 L494.8,463.5 L500.8,466.1 L502.9,470.7 L500.4,475.4 L496.5,479.7 L491.4,482.2 L489.7,484.3 L485.5,485.2 L483.8,487.3 L479.5,487.7 L477.0,490.8 L473.5,497.8 L471.0,487.7 L470.8,497.0 L465.6,485.0 L466.6,493.5 L466.2,501.5 L464.0,504.5 L461.8,501.5 L461.4,493.5 L462.4,485.0 L457.2,497.0 L457.0,487.7 L454.5,497.8 L451.0,490.8 L448.5,487.7 L444.2,487.3 L442.5,485.2 L438.3,484.3 L436.6,482.2 L431.5,479.7 L427.6,475.4 L425.1,470.7 L427.2,466.1 L433.2,463.5 L443.4,466.1 L451.9,469.9 L438.2,458.1 L430.2,449.4 L424.7,439.6 L420.4,431.0 L418.0,421.0 L420.0,414.9 L427.2,415.0 L434.7,418.4 L435.0,408.1" fill="none" stroke="#1a7a10" stroke-width="0.8" stroke-linejoin="round"/>
<text x="774.00" y="483.00" font-size="11" text-anchor="middle" fill="#000">0°</text>
<text x="772.20" y="423.00" font-size="11" text-anchor="middle" fill="#000">10°</text>
<text x="759.10" y="372.00" font-size="11" text-anchor="middle" fill="#000">20°</text>
<text x="736.00" y="324.00" font-size="11" text-anchor="middle" fill="#000">30°</text>
<text x="706.20" y="281.00" font-size="11" text-anchor="middle" fill="#000">40°</text>
<text x="668.00" y="243.00" font-size="11" text-anchor="middle" fill="#000">50°</text>
<text x="624.60" y="213.30" font-size="11" text-anchor="middle" fill="#000">60°</text>
<text x="577.20" y="190.40" font-size="11" text-anchor="middle" fill="#000">70°</text>
<text x="526.50" y="177.30" font-size="11" text-anchor="middle" fill="#000">80°</text>
<text x="463.20" y="172.00" font-size="11" text-anchor="middle" fill="#000">90°</text>
<text x="396.00" y="177.30" font-size="11" text-anchor="middle" fill="#000">100°</text>
<text x="345.30" y="190.40" font-size="11" text-anchor="middle" fill="#000">110°</text>
<text x="297.30" y="213.30" font-size="11" text-anchor="middle" fill="#000">120°</text>
<text x="254.40" y="243.00" font-size="11" text-anchor="middle" fill="#000">130°</text>
<text x="216.20" y="281.00" font-size="11" text-anchor="middle" fill="#000">140°</text>
<text x="186.30" y="324.00" font-size="11" text-anchor="middle" fill="#000">150°</text>
<text x="163.70" y="372.00" font-size="11" text-anchor="middle" fill="#000">160°</text>
<text x="150.30" y="423.00" font-size="11" text-anchor="middle" fill="#000">170°</text>
<text x="145.50" y="483.00" font-size="11" text-anchor="middle" fill="#000">180°</text>
<text x="150.30" y="543.00" font-size="11" text-anchor="middle" fill="#000">190°</text>
<text x="163.70" y="594.00" font-size="11" text-anchor="middle" fill="#000">200°</text>
<text x="186.30" y="642.00" font-size="11" text-anchor="middle" fill="#000">210°</text>
<text x="216.20" y="685.00" font-size="11" text-anchor="middle" fill="#000">220°</text>
<text x="254.40" y="723.00" font-size="11" text-anchor="middle" fill="#000">230°</text>
<text x="297.30" y="752.70" font-size="11" text-anchor="middle" fill="#000">240°</text>
<text x="345.30" y="775.60" font-size="11" text-anchor="middle" fill="#000">250°</text>
<text x="396.00" y="788.70" font-size="11" text-anchor="middle" fill="#000">260°</text>
<text x="463.20" y="794.00" font-size="11" text-anchor="middle" fill="#000">270°</text>
<text x="529.40" y="788.70" font-size="11" text-anchor="middle" fill="#000">280°</text>
<text x="580.10" y="775.60" font-size="11" text-anchor="middle" fill="#000">290°</text>
<text x="627.50" y="752.70" font-size="11" text-anchor="middle" fill="#000">300°</text>
<text x="670.90" y="723.00" font-size="11" text-anchor="middle" fill="#000">310°</text>
<text x="709.10" y="685.00" font-size="11" text-anchor="middle" fill="#000">320°</text>
<text x="738.90" y="642.00" font-size="11" text-anchor="middle" fill="#000">330°</text>
<text x="762.00" y="594.00" font-size="11" text-anchor="middle" fill="#000">340°</text>
<text x="775.10" y="543.00" font-size="11" text-anchor="middle" fill="#000">350°</text>
<text x="461.5" y="157.8" font-size="16" text-anchor="middle" fill="#000">mom_pattern_pattern_polar_yz</text>
<rect x="891" y="210.5" width="120" height="58" fill="#c8c8c8" opacity="0.6"/>
<rect x="889" y="208.5" width="118.5" height="56.5" fill="#fff" stroke="#505050" stroke-width="1.5"/>
<rect x="893" y="213" width="11.5" height="11.5" fill="#fff"/>
<path d="M893.5,224.5 V213.5 H904.5" fill="none" stroke="#e2e2e2" stroke-width="1"/>
<path d="M904,213 V224 H893" fill="none" stroke="#e4e4e4" stroke-width="1"/>
<path d="M893.9,224.5 V213.9 H904.5" fill="none" stroke="#7a7a7a" stroke-width="1.8"/>
<path d="M896.2,218.6 L898.5,221.8 L902.9,216.2" fill="none" stroke="#000" stroke-width="2.1"/>
<line x1="909" y1="219" x2="927.5" y2="219" stroke="#ff0000" stroke-width="2.2"/>
<text x="933.5" y="223" font-size="11" fill="#ff0000" letter-spacing="0">mag_e_theta</text>
<rect x="893" y="230" width="11.5" height="11.5" fill="#fff"/>
<path d="M893.5,241.5 V230.5 H904.5" fill="none" stroke="#e2e2e2" stroke-width="1"/>
<path d="M904,230 V241 H893" fill="none" stroke="#e4e4e4" stroke-width="1"/>
<path d="M893.9,241.5 V230.9 H904.5" fill="none" stroke="#7a7a7a" stroke-width="1.8"/>
<path d="M896.2,235.6 L898.5,238.8 L902.9,233.2" fill="none" stroke="#000" stroke-width="2.1"/>
<line x1="909" y1="236" x2="927.5" y2="236" stroke="#6a6ab8" stroke-width="1.6"/>
<text x="933.5" y="240" font-size="11" fill="#0000b0" letter-spacing="0">mag_e_phi</text>
<rect x="893" y="247" width="11.5" height="11.5" fill="#fff"/>
<path d="M893.5,258.5 V247.5 H904.5" fill="none" stroke="#e2e2e2" stroke-width="1"/>
<path d="M904,247 V258 H893" fill="none" stroke="#e4e4e4" stroke-width="1"/>
<path d="M893.9,258.5 V247.9 H904.5" fill="none" stroke="#7a7a7a" stroke-width="1.8"/>
<path d="M896.2,252.6 L898.5,255.8 L902.9,250.2" fill="none" stroke="#000" stroke-width="2.1"/>
<line x1="909" y1="253" x2="927.5" y2="253" stroke="#60b060" stroke-width="1.6"/>
<text x="933.5" y="257" font-size="11" fill="#008000" letter-spacing="0">mag_e_total</text>
<g fill="#b4b4b4"><rect x="1046" y="875" width="2" height="2"/><rect x="1043" y="878" width="2" height="2"/><rect x="1046" y="878" width="2" height="2"/><rect x="1040" y="881" width="2" height="2"/><rect x="1043" y="881" width="2" height="2"/><rect x="1046" y="881" width="2" height="2"/></g>
</svg>
</body></html>
